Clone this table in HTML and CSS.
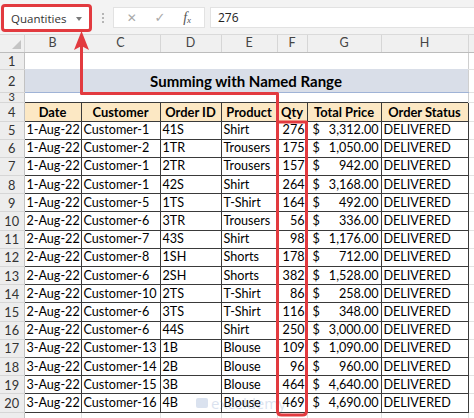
FILE: index.html
```html
<!DOCTYPE html>
<html lang="en">
<head>
<meta charset="utf-8">
<title>Summing with Named Range</title>
<link rel="stylesheet" href="styles.css">
</head>
<body>
<div class="app">
  <div class="toolbar">
    <div class="namebox"><span class="name">Quantities</span><span class="caret"></span></div>
    <div class="grip"><i></i><i></i><i></i></div>
    <div class="fx-buttons">
      <span class="btn cancel">&#x2715;</span>
      <span class="btn enter">&#x2713;</span>
      <span class="btn fx">f<sub>x</sub></span>
    </div>
    <div class="fx-input">276</div>
  </div>

  <table class="sheet">
    <colgroup>
      <col class="c-rh"><col class="c-b"><col class="c-c"><col class="c-d"><col class="c-e"><col class="c-f"><col class="c-g"><col class="c-h"><col class="c-i">
    </colgroup>
    <thead>
      <tr class="colhead">
        <th class="corner"><span class="tri"></span></th><th>B</th><th>C</th><th>D</th><th>E</th><th>F</th><th>G</th><th>H</th><th></th>
      </tr>
    </thead>
    <tbody>
      <tr class="r1"><th>1</th><td colspan="7"></td><td class="out"></td></tr>
      <tr class="r2"><th>2</th><td colspan="7" class="title">Summing with Named Range</td><td class="out"></td></tr>
      <tr class="r3"><th>3</th><td colspan="7" class="gap"></td><td class="out"></td></tr>
      <tr class="hdr"><th>4</th><td>Date</td><td>Customer</td><td>Order ID</td><td>Product</td><td>Qty</td><td>Total Price</td><td>Order Status</td><td class="out"></td></tr>
      <tr><th>5</th><td class="dt">1-Aug-22</td><td>Customer-1</td><td>41S</td><td>Shirt</td><td class="num">276</td><td class="money"><span class="cur">$</span>3,312.00</td><td>DELIVERED</td><td class="out"></td></tr>
      <tr><th>6</th><td class="dt">1-Aug-22</td><td>Customer-2</td><td>1TR</td><td>Trousers</td><td class="num">175</td><td class="money"><span class="cur">$</span>1,050.00</td><td>DELIVERED</td><td class="out"></td></tr>
      <tr><th>7</th><td class="dt">1-Aug-22</td><td>Customer-1</td><td>2TR</td><td>Trousers</td><td class="num">157</td><td class="money"><span class="cur">$</span>942.00</td><td>DELIVERED</td><td class="out"></td></tr>
      <tr><th>8</th><td class="dt">1-Aug-22</td><td>Customer-1</td><td>42S</td><td>Shirt</td><td class="num">264</td><td class="money"><span class="cur">$</span>3,168.00</td><td>DELIVERED</td><td class="out"></td></tr>
      <tr><th>9</th><td class="dt">1-Aug-22</td><td>Customer-5</td><td>1TS</td><td>T-Shirt</td><td class="num">164</td><td class="money"><span class="cur">$</span>492.00</td><td>DELIVERED</td><td class="out"></td></tr>
      <tr><th>10</th><td class="dt">2-Aug-22</td><td>Customer-6</td><td>3TR</td><td>Trousers</td><td class="num">56</td><td class="money"><span class="cur">$</span>336.00</td><td>DELIVERED</td><td class="out"></td></tr>
      <tr><th>11</th><td class="dt">2-Aug-22</td><td>Customer-7</td><td>43S</td><td>Shirt</td><td class="num">98</td><td class="money"><span class="cur">$</span>1,176.00</td><td>DELIVERED</td><td class="out"></td></tr>
      <tr><th>12</th><td class="dt">2-Aug-22</td><td>Customer-8</td><td>1SH</td><td>Shorts</td><td class="num">178</td><td class="money"><span class="cur">$</span>712.00</td><td>DELIVERED</td><td class="out"></td></tr>
      <tr><th>13</th><td class="dt">2-Aug-22</td><td>Customer-6</td><td>2SH</td><td>Shorts</td><td class="num">382</td><td class="money"><span class="cur">$</span>1,528.00</td><td>DELIVERED</td><td class="out"></td></tr>
      <tr><th>14</th><td class="dt">2-Aug-22</td><td>Customer-10</td><td>2TS</td><td>T-Shirt</td><td class="num">86</td><td class="money"><span class="cur">$</span>258.00</td><td>DELIVERED</td><td class="out"></td></tr>
      <tr><th>15</th><td class="dt">2-Aug-22</td><td>Customer-6</td><td>3TS</td><td>T-Shirt</td><td class="num">116</td><td class="money"><span class="cur">$</span>348.00</td><td>DELIVERED</td><td class="out"></td></tr>
      <tr><th>16</th><td class="dt">2-Aug-22</td><td>Customer-6</td><td>44S</td><td>Shirt</td><td class="num">250</td><td class="money"><span class="cur">$</span>3,000.00</td><td>DELIVERED</td><td class="out"></td></tr>
      <tr><th>17</th><td class="dt">3-Aug-22</td><td>Customer-13</td><td>1B</td><td>Blouse</td><td class="num">109</td><td class="money"><span class="cur">$</span>1,090.00</td><td>DELIVERED</td><td class="out"></td></tr>
      <tr><th>18</th><td class="dt">3-Aug-22</td><td>Customer-14</td><td>2B</td><td>Blouse</td><td class="num">96</td><td class="money"><span class="cur">$</span>960.00</td><td>DELIVERED</td><td class="out"></td></tr>
      <tr><th>19</th><td class="dt">3-Aug-22</td><td>Customer-15</td><td>3B</td><td>Blouse</td><td class="num">464</td><td class="money"><span class="cur">$</span>4,640.00</td><td>DELIVERED</td><td class="out"></td></tr>
      <tr><th>20</th><td class="dt">3-Aug-22</td><td>Customer-16</td><td>4B</td><td>Blouse</td><td class="num">469</td><td class="money"><span class="cur">$</span>4,690.00</td><td>DELIVERED</td><td class="out"></td></tr>
      <tr class="r21"><th>21</th><td></td><td></td><td></td><td></td><td></td><td></td><td></td><td class="out"></td></tr>
    </tbody>
  </table>

  <div class="watermark"><span class="wm-logo"></span><span class="wm-text">exceldemy</span></div>

  <svg class="overlay" width="474" height="418" viewBox="0 0 474 418" aria-hidden="true">
    <path class="red-line" d="M81.5 46 V93.5 H277.5 V411 Q277.5 415 281.5 415 H302.5 Q306.5 415 306.5 411 V122 H277.5"/>
    <polygon class="red-head" points="81.5,31 74,50 81.5,46 89,50"/>
  </svg>
</div>
</body>
</html>
```

FILE: styles.css
```css
* { box-sizing: border-box; }

html, body {
  margin: 0;
  padding: 0;
  background: #ffffff;
}

.app {
  position: relative;
  width: 474px;
  height: 418px;
  overflow: hidden;
  font-family: "Lato", "Open Sans", sans-serif;
  color: #000;
}

/* ---------- formula bar ---------- */
.toolbar {
  height: 35px;
  background: #f3f3f3;
  display: flex;
  align-items: flex-start;
  padding-top: 4px;
  padding-left: 1px;
  border-bottom: 1px solid #dadada;
}

.namebox {
  width: 91px;
  height: 28px;
  border: 3px solid #e23a3f;
  border-radius: 4px;
  background: #ffffff;
  display: flex;
  align-items: center;
  justify-content: space-between;
  padding: 0 7px 0 7px;
  font-family: "Open Sans", "Noto Sans", sans-serif;
  font-size: 11.5px;
  color: #333;
}

.caret {
  width: 0;
  height: 0;
  border-left: 3.5px solid transparent;
  border-right: 3.5px solid transparent;
  border-top: 4px solid #7a7a7a;
  margin-top: 1px;
}

.grip {
  width: 21px;
  height: 28px;
  display: flex;
  flex-direction: column;
  align-items: center;
  justify-content: center;
  gap: 2px;
}
.grip i {
  display: block;
  width: 2px;
  height: 2px;
  background: #b5b5b5;
}

.fx-buttons {
  margin-top: 3px;
  width: 92px;
  height: 21px;
  background: #ffffff;
  border: 1px solid #e2e2e2;
  display: flex;
  align-items: center;
  justify-content: space-around;
  padding: 0 4px;
  color: #a8a8a8;
  font-family: "DejaVu Sans", sans-serif;
  font-size: 12px;
}
.btn.enter { font-size: 13px; }
.btn.fx {
  font-family: "Liberation Serif", serif;
  font-style: italic;
  font-size: 14px;
  color: #555;
}
.btn.fx sub { font-size: 9px; vertical-align: -1px; }

.fx-input {
  margin-top: 3px;
  margin-left: 5px;
  flex: 1;
  height: 21px;
  background: #ffffff;
  border: 1px solid #e2e2e2;
  border-right: none;
  padding-left: 7px;
  font-family: "Open Sans", "Noto Sans", sans-serif;
  font-size: 12px;
  line-height: 19px;
  color: #222;
}

/* ---------- sheet ---------- */
.sheet {
  border-collapse: collapse;
  table-layout: fixed;
  width: 528px;
  font-size: 12.6px;
}

.c-rh { width: 24px; }
.c-b { width: 57px; }
.c-c { width: 79px; }
.c-d { width: 61px; }
.c-e { width: 56px; }
.c-f { width: 30px; }
.c-g { width: 74px; }
.c-h { width: 87px; }
.c-i { width: 60px; }

.sheet th, .sheet td {
  padding: 0 2px;
  white-space: nowrap;
  overflow: hidden;
  line-height: 16px;
}

.colhead th {
  height: 17px;
  background: #f0f0f0;
  color: #444;
  font-weight: normal;
  font-size: 12.5px;
  text-align: center;
  border-right: 1px solid #d6d6d6;
  border-bottom: 1px solid #bcbcbc;
}

.corner { position: relative; }
.tri {
  position: absolute;
  right: 3px;
  bottom: 3px;
  width: 0;
  height: 0;
  border-left: 9px solid transparent;
  border-bottom: 9px solid #c4c4c4;
}

tbody th {
  background: #ededed;
  color: #333;
  font-weight: normal;
  font-size: 12.8px;
  text-align: center;
  border-right: 1px solid #c2c2c2;
  border-bottom: 1px solid #d6d6d6;
}

tbody tr { height: 18.2px; }
tr.r1 { height: 17px; }
tr.r2 { height: 23px; }
tr.r3 { height: 10px; }
tr.hdr { height: 19px; }
tr.r3 th { font-size: 11px; line-height: 8px; vertical-align: top; }
tr.r21 th { vertical-align: bottom; line-height: 30px; }

.r1 td, .r3 td { background: #fff; }
.r2 .title {
  background: #d9dee8;
  border-bottom: 1px solid #9fb3d6;
  text-align: center;
  font-weight: bold;
  font-size: 15px;
  padding-top: 2px;
}

.out {
  border-left: 1px solid #cfcfcf;
  border-bottom: 1px solid #e2e2e2;
}

.hdr td {
  background: #fce8c4;
  font-weight: bold;
  font-size: 12.9px;
  text-align: center;
  border: 1px solid #3a3a3a;
}
.hdr td.out { background: #fff; border: none; border-left: 1px solid #3a3a3a; border-bottom: 1px solid #e2e2e2; }

tbody tr:not(.r1):not(.r2):not(.r3):not(.hdr):not(.r21) td:not(.out) {
  border: 1px solid #3a3a3a;
}

.dt { text-align: right; }
.num { text-align: right; padding-right: 4px; }
.money { text-align: right; padding-right: 4px; }
.money .cur { float: left; padding-left: 3px; }

.r21 td { border-right: 1px solid #e2e2e2; }

/* ---------- overlay ---------- */
.overlay {
  position: absolute;
  left: 0;
  top: 0;
  pointer-events: none;
}
.red-line {
  fill: none;
  stroke: #e23a3f;
  stroke-width: 3;
  stroke-linejoin: round;
}
.red-head { fill: #e23a3f; }

.watermark {
  position: absolute;
  left: 196px;
  top: 393px;
  display: flex;
  align-items: center;
  gap: 3px;
  opacity: 0.22;
  pointer-events: none;
}
.wm-logo {
  width: 12px;
  height: 10px;
  background: #5b7fb8;
  border-radius: 2px;
}
.wm-text {
  font-family: "Open Sans", sans-serif;
  font-size: 15px;
  color: #5b7fb8;
}
```
